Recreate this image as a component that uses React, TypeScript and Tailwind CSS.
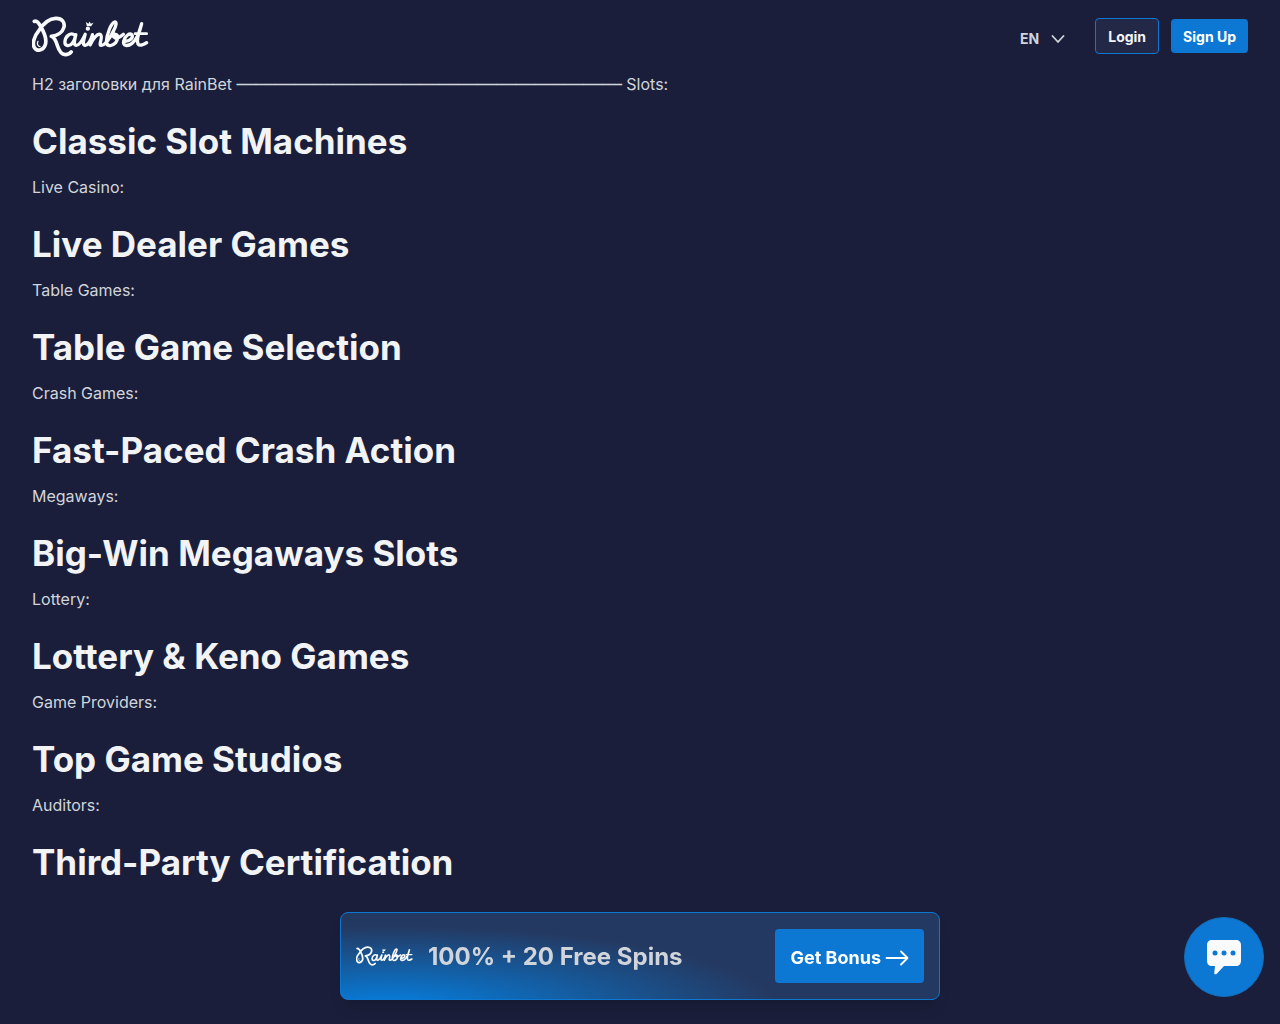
import React from "react";

const sections = [
  { heading: "Classic Slot Machines", next: "Live Casino:" },
  { heading: "Live Dealer Games", next: "Table Games:" },
  { heading: "Table Game Selection", next: "Crash Games:" },
  { heading: "Fast-Paced Crash Action", next: "Megaways:" },
  { heading: "Big-Win Megaways Slots", next: "Lottery:" },
  { heading: "Lottery & Keno Games", next: "Game Providers:" },
  { heading: "Top Game Studios", next: "Auditors:" },
  { heading: "Third-Party Certification", next: "" },
];

function Logo({ className }: { className: string }) {
  return (
    <svg
      className={className}
      viewBox="36 31 352 123"
      fill="none"
      stroke="#f8fafc"
      strokeWidth="10"
      strokeLinecap="round"
      strokeLinejoin="round"
      role="img"
      aria-label="Rainbet"
    >
      <path d="M43 47C50 43 57 52 63 64C74 83 82 105 75 120C69 135 51 138 44 127C35 114 43 91 57 74C70 54 87 39 107 38C126 37 136 50 132 65C128 80 112 90 94 92C102 94 107 103 112 119C117 135 124 147 136 147C145 147 151 143 154 139" strokeWidth="11" />
      <path d="M54 107C50 115 53 122 60 123" strokeWidth="4" />
      <path d="M165 89C152 77 136 93 135 108C134 122 149 124 158 112C164 104 166 97 168 87C164 104 160 119 169 119C180 119 190 99 196 86C192 101 186 120 196 119C207 117 214 100 218 87L211 118C218 100 234 81 242 87C251 94 235 118 244 119C255 120 271 98 281 76C290 58 292 48 284 49C273 52 261 89 260 106C259 123 276 124 287 112C295 101 297 88 287 86C281 85 278 92 285 96C295 101 305 91 311 86" />
      <path d="M316 107C330 106 341 97 337 88C332 79 315 91 312 106C308 122 324 123 337 113C350 103 361 76 366 54C356 82 351 106 355 115C360 122 373 117 381 111" />
      <path d="M346 84H381" strokeWidth="8" />
      <circle cx="204" cy="69" r="6.500" fill="#f8fafc" stroke="none" />
      <path d="M201 61L198 49L206 54L209 47L213 54L221 51L214 62Z" fill="#f8fafc" stroke="none" />
    </svg>
  );
}

export default function App() {
  return (
    <div className="min-h-screen bg-[#1a1e3a] font-['Inter',sans-serif] text-[#d1d5db]">
      <header className="flex h-[72px] items-center justify-between px-8">
        <a href="#" aria-label="Rainbet home">
          <Logo className="h-[41px] w-[117px]" />
        </a>
        <nav className="flex items-center text-sm font-bold" aria-label="Account">
          <button className="mt-1.5 mr-[30px] flex items-center gap-3">
            EN
            <svg className="h-2 w-3.5" viewBox="0 0 14 8" fill="none" stroke="currentColor" strokeWidth="1.8" strokeLinecap="round" strokeLinejoin="round" aria-hidden="true">
              <path d="M1.500 1L7 7L12.500 1" />
            </svg>
          </button>
          <button className="mr-3 h-9 rounded border border-[#0d78d3] bg-[#232846] px-3 pt-0.5 text-gray-100">Login</button>
          <button className="h-[34px] rounded bg-[#0d78d3] px-3 pt-0.5 text-white">Sign Up</button>
        </nav>
      </header>

      <main className="px-8 text-base leading-6">
        <p>
          H2 заголовки для RainBet{" "}
          <span className="font-['DejaVu_Sans',sans-serif] leading-none">{"─".repeat(40)}</span>
          {" "}Slots:
        </p>
        {sections.map((section) => (
          <section key={section.heading}>
            <h2 className="pt-[25px] pb-[13px] text-[35px] leading-[41px] font-bold text-[#f1f3f5]">{section.heading}</h2>
            <p className="min-h-6">{section.next}</p>
          </section>
        ))}
      </main>

      <aside className="fixed inset-x-4 bottom-6 mx-auto flex h-[88px] max-w-[600px] items-center rounded-lg border border-[#0d78d3] bg-[#243961] bg-[radial-gradient(ellipse_65%_95%_at_8%_110%,#0879d4_0%,#0879d4_10%,transparent_100%)] px-[15px] shadow-lg">
        <Logo className="h-5 w-[57px] shrink-0" />
        <strong className="ml-[15px] pt-0.5 text-2xl font-bold">100% + 20 Free Spins</strong>
        <a href="#" className="ml-auto flex h-[54px] items-center gap-1 rounded bg-[#0d78d3] px-[15px] pt-1 text-lg font-bold text-white">
          Get Bonus
          <svg className="h-4 w-6" viewBox="0 0 24 16" fill="none" stroke="currentColor" strokeWidth="1.8" strokeLinecap="round" strokeLinejoin="round" aria-hidden="true">
            <path d="M1.500 8H22M16 1.500L22.500 8L16 14.500" />
          </svg>
        </a>
      </aside>

      <button className="fixed right-4 bottom-[27px] flex size-20 items-center justify-center rounded-full border border-[#176cb4] bg-[#0d78d3]" aria-label="Open chat">
        <svg className="h-[35px] w-[34px]" viewBox="0 0 34 35" aria-hidden="true">
          <path d="M5 0H29C32 0 34 2 34 5V21C34 24 32 26 29 26H17L10 33.500C8.500 35 7 34.500 7.300 32.500L8 26H5C2 26 0 24 0 21V5C0 2 2 0 5 0Z" fill="#f8fafc" />
          <g fill="#0d78d3">
            <circle cx="8" cy="13" r="2.500" />
            <circle cx="17" cy="13" r="2.500" />
            <circle cx="26" cy="13" r="2.500" />
          </g>
        </svg>
      </button>
    </div>
  );
}
